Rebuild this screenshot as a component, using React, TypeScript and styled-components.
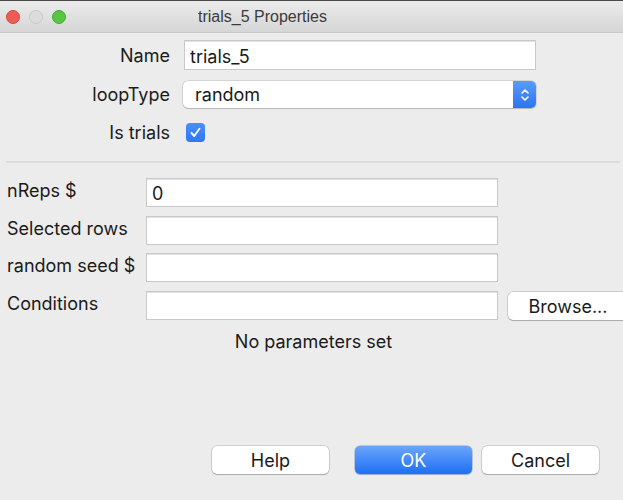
import React from "react";
import styled, { createGlobalStyle } from "styled-components";

const Global = createGlobalStyle`
  html, body { margin: 0; padding: 0; background: #ececec; }
  body { font-family: Inter, "Liberation Sans", Arial, sans-serif; }
  * { box-sizing: border-box; }
`;

const Window = styled.div`
  width: 623px;
  height: 500px;
  background: #ececec;
  display: flex;
  flex-direction: column;
  overflow: hidden;
  color: #1a1a1a;
`;

const TitleBar = styled.div`
  height: 33px;
  flex: 0 0 33px;
  border-top: 1px solid #4a4a4a;
  border-bottom: 1px solid #c8c8c8;
  background: linear-gradient(#ebebeb, #d6d6d6);
  display: flex;
  align-items: center;
  position: relative;
  padding-left: 6px;
`;

const Lights = styled.div`
  display: flex;
  gap: 9px;
  align-items: center;
`;

const Light = styled.span<{ $c: string; $b: string }>`
  width: 14px;
  height: 14px;
  border-radius: 50%;
  background: ${(p) => p.$c};
  border: 1px solid ${(p) => p.$b};
`;

const Title = styled.div`
  position: absolute;
  left: 0;
  right: 98px;
  top: 0;
  bottom: 0;
  display: flex;
  align-items: center;
  justify-content: center;
  font-family: "Liberation Sans", Arial, sans-serif;
  font-size: 16px;
  color: #3a3a3a;
  pointer-events: none;
`;

const TopForm = styled.div`
  display: flex;
  flex-direction: column;
  padding-top: 7px;
`;

const TopRow = styled.div<{ $mt: number; $h: number }>`
  display: flex;
  align-items: center;
  height: ${(p) => p.$h}px;
  margin-top: ${(p) => p.$mt}px;
`;

const TopLabel = styled.div`
  width: 170px;
  flex-shrink: 0;
  text-align: right;
  font-size: 18px;
  margin-right: 14px;
`;

const TextInput = styled.div<{ $w: number; $h: number }>`
  width: ${(p) => p.$w}px;
  flex-shrink: 0;
  height: ${(p) => p.$h}px;
  background: #fff;
  border: 1px solid #c9c9c9;
  box-shadow: inset 0 1px 0 #e2e2e2;
  display: flex;
  align-items: center;
  padding-left: 5px;
  font-size: 18px;
  padding-top: 2px;
`;

const Select = styled.div`
  width: 353px;
  flex-shrink: 0;
  height: 27px;
  margin-left: -1px;
  background: #fff;
  border-radius: 5px;
  box-shadow: 0 0 0 0.5px rgba(0, 0, 0, 0.2), 0 1px 1px rgba(0, 0, 0, 0.15);
  display: flex;
  align-items: center;
  overflow: hidden;
  font-size: 18px;
`;

const SelectText = styled.div`
  flex: 1;
  padding-left: 12px;
`;

const Stepper = styled.div`
  width: 23px;
  height: 100%;
  background: linear-gradient(#5b9bfa, #2c74f2);
  display: flex;
  align-items: center;
  justify-content: center;
`;

const Check = styled.div`
  width: 19px;
  height: 19px;
  margin-left: 2px;
  border-radius: 4px;
  background: linear-gradient(#4b8ef8, #2f77f2);
  display: flex;
  align-items: center;
  justify-content: center;
`;

const Separator = styled.div`
  height: 2px;
  margin: 19px 3px 0 6px;
  background: #dcdcdc;
`;

const LowerForm = styled.div`
  display: flex;
  flex-direction: column;
  gap: 8.5px;
  padding-top: 15px;
`;

const LowerRow = styled.div`
  display: flex;
  align-items: center;
  height: 29px;
`;

const LowerLabel = styled.div`
  width: 146px;
  flex-shrink: 0;
  padding-left: 7px;
  font-size: 18px;
  margin-top: -4px;
  white-space: nowrap;
`;

const PushButton = styled.button<{ $primary?: boolean; $w?: number }>`
  width: ${(p) => p.$w ?? 117}px;
  flex-shrink: 0;
  height: 28px;
  border: none;
  border-radius: 5px;
  font-family: inherit;
  font-size: 18px;
  padding: 0;
  padding-top: 1px;
  color: ${(p) => (p.$primary ? "#fff" : "#1a1a1a")};
  background: ${(p) =>
    p.$primary ? "linear-gradient(#6aa5fb, #1f6ff3)" : "#fff"};
  box-shadow: ${(p) =>
    p.$primary
      ? "0 0 0 0.5px rgba(30,90,200,0.5), 0 1px 1px rgba(0,0,0,0.15)"
      : "0 0 0 0.5px rgba(0,0,0,0.25), 0 1px 1px rgba(0,0,0,0.18)"};
`;

const BrowseWrap = styled.div`
  margin-left: 10px;
  margin-top: 1px;
  flex-shrink: 0;
`;

const Note = styled.div`
  text-align: center;
  font-size: 18px;
  padding-left: 4px;
  margin-top: 11px;
`;

const Spacer = styled.div`
  flex: 1;
`;

const Footer = styled.div`
  display: flex;
  align-items: center;
  padding-left: 212px;
  height: 28px;
  margin-bottom: 26px;
`;

const FooterGap = styled.div<{ $w: number }>`
  width: ${(p) => p.$w}px;
`;

export default function App() {
  return (
    <>
      <Global />
      <Window>
        <TitleBar>
          <Lights>
            <Light $c="#ee5d55" $b="#d8463f" />
            <Light $c="#dcdcdc" $b="#c8c8c8" />
            <Light $c="#58c544" $b="#3fae2e" />
          </Lights>
          <Title>trials_5 Properties</Title>
        </TitleBar>

        <TopForm>
          <TopRow $mt={0} $h={30}>
            <TopLabel>Name</TopLabel>
            <TextInput $w={352} $h={30}>trials_5</TextInput>
          </TopRow>
          <TopRow $mt={11} $h={27}>
            <TopLabel>loopType</TopLabel>
            <Select>
              <SelectText>random</SelectText>
              <Stepper>
                <svg width="10" height="16" viewBox="0 0 10 16" fill="none">
                  <path
                    d="M2 6 L5 3 L8 6 M2 10 L5 13 L8 10"
                    stroke="#fff"
                    strokeWidth="1.6"
                    strokeLinecap="round"
                    strokeLinejoin="round"
                  />
                </svg>
              </Stepper>
            </Select>
          </TopRow>
          <TopRow $mt={14} $h={20}>
            <TopLabel>Is trials</TopLabel>
            <Check>
              <svg width="13" height="13" viewBox="0 0 13 13" fill="none">
                <path
                  d="M2.5 7 L5.2 10 L10.5 2.8"
                  stroke="#fff"
                  strokeWidth="1.9"
                  strokeLinecap="round"
                  strokeLinejoin="round"
                />
              </svg>
            </Check>
          </TopRow>
        </TopForm>

        <Separator />

        <LowerForm>
          <LowerRow>
            <LowerLabel>nReps $</LowerLabel>
            <TextInput $w={352} $h={29}>0</TextInput>
          </LowerRow>
          <LowerRow>
            <LowerLabel>Selected rows</LowerLabel>
            <TextInput $w={352} $h={29} />
          </LowerRow>
          <LowerRow>
            <LowerLabel>random seed $</LowerLabel>
            <TextInput $w={352} $h={29} />
          </LowerRow>
          <LowerRow>
            <LowerLabel>Conditions</LowerLabel>
            <TextInput $w={352} $h={29} />
            <BrowseWrap>
              <PushButton $w={120}>Browse...</PushButton>
            </BrowseWrap>
          </LowerRow>
        </LowerForm>

        <Note>No parameters set</Note>

        <Spacer />

        <Footer>
          <PushButton>Help</PushButton>
          <FooterGap $w={26} />
          <PushButton $primary>OK</PushButton>
          <FooterGap $w={10} />
          <PushButton>Cancel</PushButton>
        </Footer>
      </Window>
    </>
  );
}
